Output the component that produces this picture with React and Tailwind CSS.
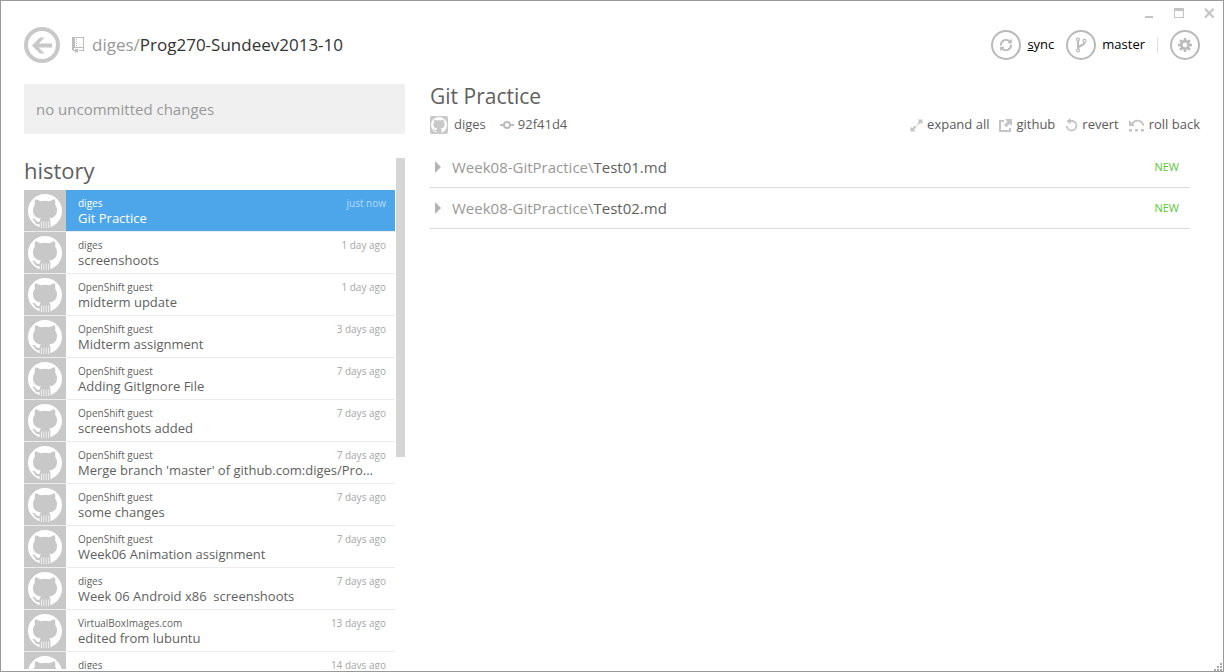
import React, { useState } from "react";

function Avatar({ small = false }) {
  return (
    <span
      className={
        small
          ? "flex size-[18px] shrink-0 items-center justify-center rounded-xs bg-[#c8c8c8]"
          : "flex w-[42px] shrink-0 items-center justify-center self-stretch bg-[#c8c8c8]"
      }
    >
      <svg viewBox="0 0 34 34" className={small ? "size-4" : "size-[34px]"} aria-hidden="true">
        <circle cx="17" cy="17" r="17" fill="#fff" />
        <path
          fill="#c8c8c8"
          d="M7.200 5.200c1.700 0 3.500 1 5 2.100 3-.7 6.600-.7 9.600 0 1.500-1.100 3.300-2.100 5-2.100.7 1.800.7 3.600.2 5.200 1.400 1.600 2 3.500 2 5.700 0 5.300-3 7.900-8 8.500 1 .9 1.400 2 1.400 3.600v5.200c-3.500.9-7.300.9-10.800 0v-3.200c-2.500.4-4-.4-4.900-2.200-.6-1.300-1.200-2-2-2.600-.6-.6.1-.9.900-.7 1.200.3 1.900 1.200 2.600 2.200.8 1.100 1.800 1.300 3.400.9.100-1.300.5-2.300 1.400-3.200-5-.6-8-3.200-8-8.500 0-2.200.6-4.100 2-5.700-.5-1.600-.5-3.400.2-5.200z"
        />
        {!small && (
          <path d="M13.500 27.500V34M15.800 27.500V34M18.200 27.500V34M20.500 27.500V34" stroke="#fff" strokeWidth=".7" />
        )}
      </svg>
    </span>
  );
}

const commits = [
  ["diges", "Git Practice", "just now"],
  ["diges", "screenshoots", "1 day ago"],
  ["OpenShift guest", "midterm update", "1 day ago"],
  ["OpenShift guest", "Midterm assignment", "3 days ago"],
  ["OpenShift guest", "Adding GitIgnore File", "7 days ago"],
  ["OpenShift guest", "screenshots added", "7 days ago"],
  ["OpenShift guest", "Merge branch 'master' of github.com:diges/Pro...", "7 days ago"],
  ["OpenShift guest", "some changes", "7 days ago"],
  ["OpenShift guest", "Week06 Animation assignment", "7 days ago"],
  ["diges", "Week 06 Android x86  screenshoots", "7 days ago"],
  ["VirtualBoxImages.com", "edited from lubuntu", "13 days ago"],
  ["diges", "", "14 days ago"],
];

const files = ["Test01.md", "Test02.md"];

function Commit({ commit, selected, onSelect }) {
  const [author, message, when] = commit;
  return (
    <li>
      <button
        type="button"
        onClick={onSelect}
        className="flex h-[42px] w-full border-b border-[#ececec] text-left"
      >
        <Avatar />
        <span
          className={
            selected
              ? "flex min-w-0 flex-1 flex-col self-stretch bg-[#4ea6ea] pt-1.5 pr-[9px] pl-3 text-white"
              : "flex min-w-0 flex-1 flex-col self-stretch pt-1.5 pr-[9px] pl-3 text-[#5f5f5f]"
          }
        >
          <span className="flex justify-between text-[10px] leading-[14px]">
            <span>{author}</span>
            <span className={selected ? "text-[#b4dafa]" : "text-[#a6a6a6]"}>{when}</span>
          </span>
          <span className="text-[13px] leading-4 whitespace-pre">{message}</span>
        </span>
      </button>
    </li>
  );
}

function Ring({ children }) {
  return (
    <span className="flex size-[30px] items-center justify-center rounded-full border-2 border-[#b9b9b9] text-[#b9b9b9]">
      {children}
    </span>
  );
}

function Action({ label, children }) {
  return (
    <button type="button" className="flex items-center gap-1 text-[#5a5a5a]">
      <span className="text-[#c4c4c4]">{children}</span>
      {label}
    </button>
  );
}

export default function App() {
  const [active, setActive] = useState(0);
  return (
    <div className="flex h-screen flex-col overflow-hidden border border-[#999] bg-white font-['Open_Sans','Noto_Sans',sans-serif] text-[#5f5f5f]">
      <div className="flex h-[26px] shrink-0 justify-end gap-[19px] pt-[7px] pr-2 text-[#c4c4c4]">
        <button type="button" aria-label="Minimize" className="h-[11px] w-[11px]">
          <svg viewBox="0 0 11 11" className="size-[11px]"><path d="M1 8h8v2H1z" fill="currentColor" /></svg>
        </button>
        <button type="button" aria-label="Maximize" className="h-[11px] w-[11px]">
          <svg viewBox="0 0 11 11" className="size-[11px]">
            <path d="M0 0h10v10H0zM1 3v6h8V3z" fill="currentColor" fillRule="evenodd" />
          </svg>
        </button>
        <button type="button" aria-label="Close" className="h-[11px] w-[11px]">
          <svg viewBox="0 0 11 11" className="size-[11px]">
            <path d="M1 .8l8.600 8.800M9.600 .8L1 9.600" stroke="currentColor" strokeWidth="2.200" />
          </svg>
        </button>
      </div>

      <header className="flex h-9 shrink-0 items-center justify-between px-[23px]">
        <div className="flex items-center">
          <button
            type="button"
            aria-label="Back"
            className="flex size-9 items-center justify-center rounded-full border-4 border-[#c8c8c8] text-[#c8c8c8]"
          >
            <svg viewBox="0 0 20 17" className="h-[17px] w-5">
              <path d="M12.500 .5H8L0 8.500l8 8h4.500L6.700 10.500H20v-4H6.700z" fill="currentColor" />
            </svg>
          </button>
          <svg viewBox="0 0 12 16" className="ml-3 h-4 w-3 text-[#bdbdbd]" aria-hidden="true">
            <path
              fill="currentColor"
              fillRule="evenodd"
              d="M0 0h12v14H7v-1h4v-2H2v2h1v1H1.500L0 13zM3 1v9h8V1zM4 2h1v1H4zM4 4h1v1H4zM4 6h1v1H4zM4 8h1v1H4zM3 12h3v4l-1.500-1.300L3 16z"
            />
          </svg>
          <h1 className="ml-2 text-[17px]">
            <span className="text-[#999]">diges/</span>
            <span className="text-[#333]">Prog270-Sundeev2013-10</span>
          </h1>
        </div>
        <div className="flex items-center text-[13px] text-black">
          <button type="button" className="flex items-center gap-1.5">
            <Ring>
              <svg viewBox="0 0 14 14" className="size-3.5" fill="none" stroke="currentColor" strokeWidth="1.800">
                <path d="M1.900 7.500V7a5.100 5.100 0 0 1 9-3.300M12.100 6.500V7a5.100 5.100 0 0 1-9 3.300" />
                <path d="M12.800.8v4.400H8.400zM1.200 13.200V8.800h4.400z" fill="currentColor" stroke="none" />
              </svg>
            </Ring>
            <span><span className="underline">s</span>ync</span>
          </button>
          <button type="button" className="ml-3 flex items-center gap-1.5">
            <Ring>
              <svg viewBox="0 0 12 16" className="h-4 w-3" fill="none" stroke="currentColor">
                <circle cx="3" cy="2.600" r="1.500" strokeWidth="1.200" />
                <circle cx="3" cy="13.400" r="1.500" strokeWidth="1.200" />
                <circle cx="9.500" cy="3.800" r="1.500" strokeWidth="1.200" />
                <path d="M3 4v8M9.500 5.500c0 3.500-6.500 2.500-6.500 6" strokeWidth="1.900" />
              </svg>
            </Ring>
            <span>master</span>
          </button>
          <span className="ml-3 h-4 w-px bg-[#dedede]" />
          <button type="button" aria-label="Settings" className="ml-3">
            <Ring>
              <svg viewBox="0 0 14 14" className="size-3.5">
                <circle cx="7" cy="7" r="3.700" fill="none" stroke="currentColor" strokeWidth="2.600" />
                <path
                  d="M7 0v2.500M7 11.500V14M0 7h2.500M11.500 7H14M2.050 2.050l1.800 1.800M10.150 10.150l1.800 1.800M2.050 11.950l1.800-1.800M10.150 3.850l1.800-1.800"
                  stroke="currentColor"
                  strokeWidth="2.600"
                />
              </svg>
            </Ring>
          </button>
        </div>
      </header>

      <div className="mt-[21px] flex min-h-0 flex-1 px-[23px] pb-0.5">
        <aside className="flex w-[381px] shrink-0 flex-col">
          <div className="flex h-[50px] shrink-0 items-center bg-[#f0f0f0] px-3 text-[15px] text-[#999]">
            no uncommitted changes
          </div>
          <div className="mt-5 flex min-h-0 flex-1 gap-px">
            <div className="min-w-0 flex-1 overflow-hidden">
              <h2 className="mb-1 text-[22px] leading-8">history</h2>
              <ul>
                {commits.map((c, i) => (
                  <Commit key={i} commit={c} selected={i === active} onSelect={() => setActive(i)} />
                ))}
              </ul>
            </div>
            <div className="mt-1 h-[299px] w-[9px] shrink-0 bg-[#d6d6d6]" />
          </div>
        </aside>

        <main className="ml-[25px] min-w-0 flex-1">
          <h2 className="text-[21px] leading-6">Git Practice</h2>
          <div className="mt-2 flex h-[18px] items-center justify-between text-[13px]">
            <div className="flex items-center">
              <Avatar small />
              <span className="ml-1.5">diges</span>
              <svg viewBox="0 0 14 8" className="ml-3.5 h-2 w-3.5 text-[#bdbdbd]" fill="none" stroke="currentColor" strokeWidth="2">
                <circle cx="7" cy="4" r="3" />
                <path d="M0 4h4M10 4h4" />
              </svg>
              <span className="ml-1">92f41d4</span>
            </div>
            <div className="flex items-center gap-2.5">
              <Action label="expand all">
                <svg viewBox="0 0 13 13" className="size-[13px]" fill="currentColor">
                  <path d="M7.500 .5h5v5l-1.700-1.700-1.500 1.500-1.600-1.600 1.500-1.500zM7.400 4.400l1.300 1.300-.9.900-1.300-1.300zM.5 12.500v-5l1.700 1.700 2.700-2.700 1.600 1.600-2.700 2.700 1.700 1.700z" />
                </svg>
              </Action>
              <Action label="github">
                <svg viewBox="0 0 13 13" className="size-[13px]" fill="currentColor">
                  <path d="M0 1h5v2H2v8h8V9h2v4H0zM6 0h7v7l-2.200-2.200L7.300 8.300 5 6l3.400-3.600z" />
                </svg>
              </Action>
              <Action label="revert">
                <svg viewBox="0 0 13 14" className="h-3.5 w-[13px]" fill="none" stroke="currentColor">
                  <path d="M4 3h3.500a4.800 4.800 0 1 1-5.700 5" strokeWidth="1.800" />
                  <path d="M5.500 0v6.500L1.500 3z" fill="currentColor" stroke="none" />
                </svg>
              </Action>
              <Action label="roll back">
                <svg viewBox="0 0 16 13" className="h-[13px] w-4" fill="none" stroke="currentColor">
                  <path d="M3 5c2.500-4.800 9.500-4.800 11.500 1.500" strokeWidth="1.800" />
                  <path d="M0 1v6h6zM0 10h3v2.500H0zM6 10h3v2.500H6zM12 10h3v2.500h-3z" fill="currentColor" stroke="none" />
                </svg>
              </Action>
            </div>
          </div>
          <ul className="mt-[13px] mr-2.5">
            {files.map((f) => (
              <li key={f} className="border-b border-[#dadada]">
                <button type="button" className="flex h-10 w-full items-center pr-[11px] pl-[5px] text-left text-[15px]">
                  <svg viewBox="0 0 6 12" className="h-3 w-1.5 text-[#b4b4b4]">
                    <path d="M0 0l6 6-6 6z" fill="currentColor" />
                  </svg>
                  <span className="ml-[11px] flex-1">
                    <span className="text-[#999]">Week08-GitPractice\</span>
                    {f}
                  </span>
                  <span className="text-[11px] text-[#5cc636]">NEW</span>
                </button>
              </li>
            ))}
          </ul>
        </main>
      </div>

      <svg viewBox="0 0 8 8" className="absolute right-0.5 bottom-px size-2" fill="#a8a8a8" aria-hidden="true">
        <path d="M6 0h2v2H6zM3 3h2v2H3zM6 3h2v2H6zM0 6h2v2H0zM3 6h2v2H3zM6 6h2v2H6z" />
      </svg>
    </div>
  );
}
